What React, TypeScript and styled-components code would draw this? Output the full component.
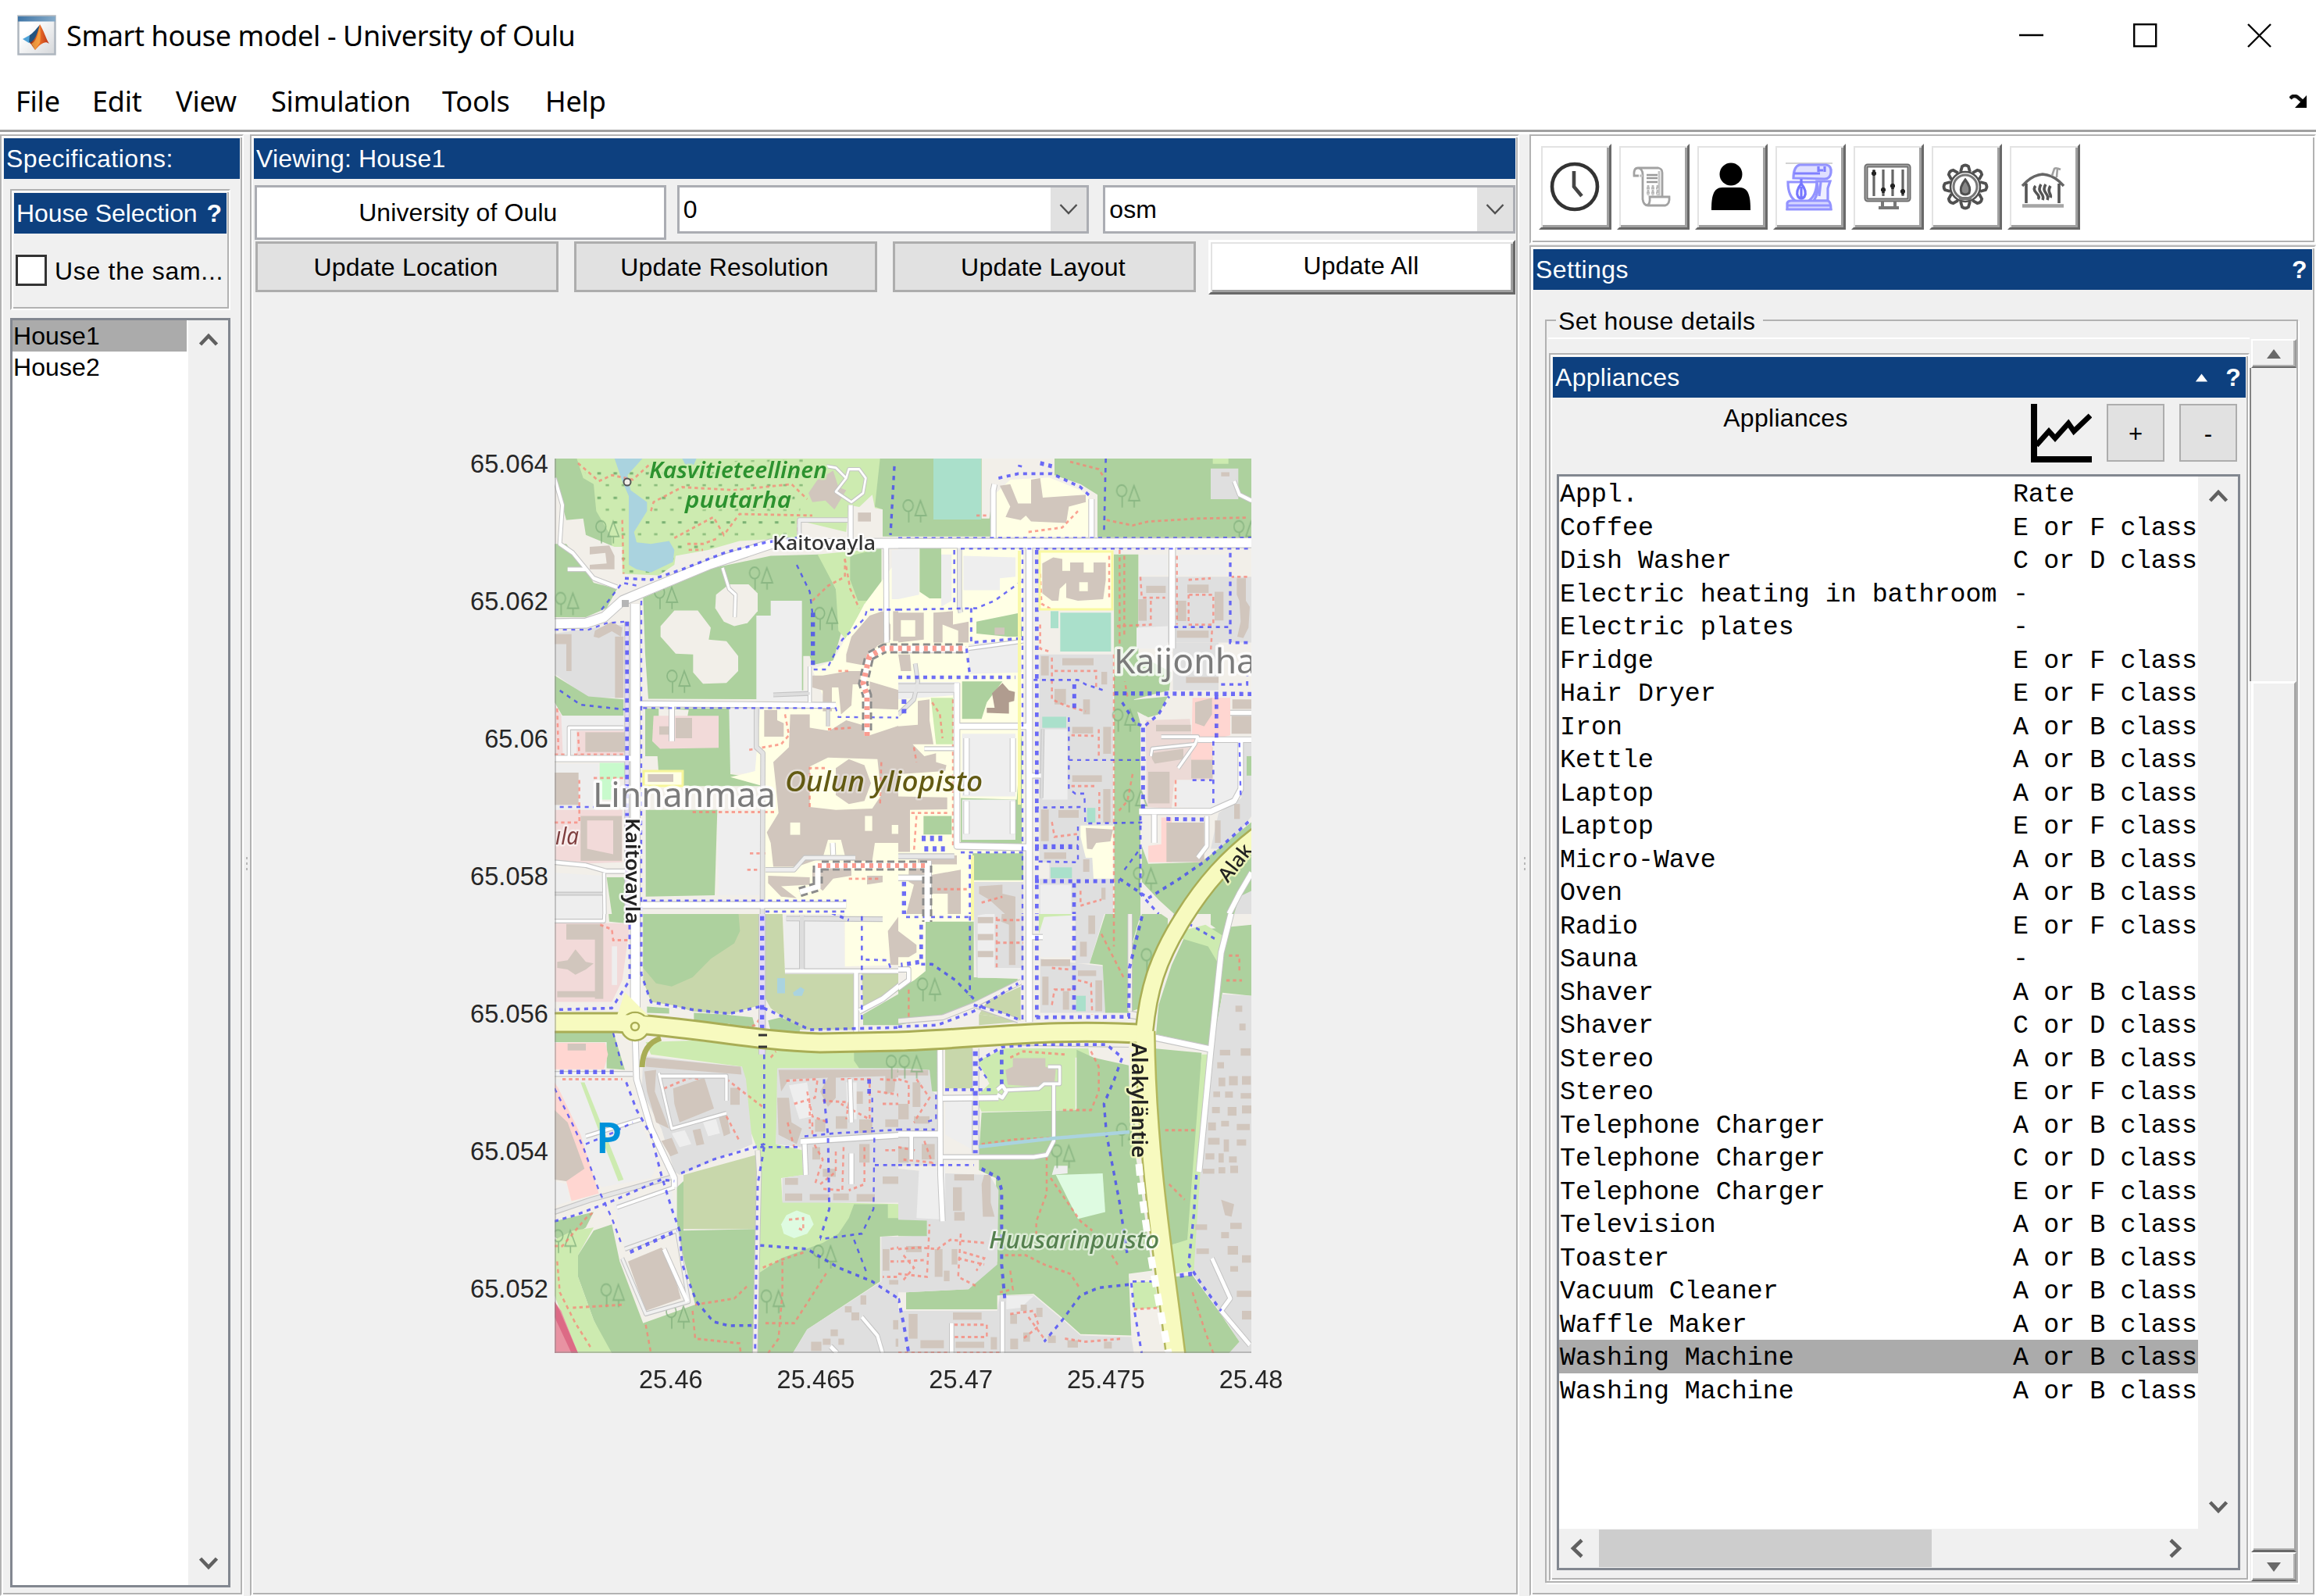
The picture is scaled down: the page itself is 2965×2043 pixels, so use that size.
import React from "react";
import styled, { createGlobalStyle, css } from "styled-components";

const BLUE = "#0d407f";
const FACE = "#f0f0f0";
const EDGE = "#b2b2b2";
const SANS = '"Liberation Sans", Arial, sans-serif';
const UI = '"Noto Sans", "Segoe UI", sans-serif';
const MONO = '"Liberation Mono", "Courier New", monospace';

const Global = createGlobalStyle`
  *, *::before, *::after { box-sizing: border-box; }
  html, body { margin: 0; padding: 0; background: #fff; overflow: hidden; }
`;

const Window = styled.div`
  width: 2965px;
  height: 2043px;
  display: flex;
  flex-direction: column;
  background: ${FACE};
  font-family: ${SANS};
  font-size: 32px;
  letter-spacing: 0.1px;
  color: #000;
  overflow: hidden;
  white-space: pre;
`;

/* ---------- title and menu ---------- */

const TitleBar = styled.header`
  flex: none;
  height: 90px;
  padding: 0 57px 0 22px;
  display: flex;
  align-items: center;
  background: #fff;
  font-family: ${UI};
  font-size: 36px;
`;

const Title = styled.h1`
  margin: 0 auto 0 13px;
  font: inherit;
  letter-spacing: -0.37px;
`;

const Controls = styled.div`
  display: flex;
  align-items: center;
  gap: 115px;
  svg { display: block; }
`;

const MenuBar = styled.nav`
  flex: none;
  height: 82px;
  display: flex;
  align-items: center;
  padding: 0 10px 0 20px;
  font-family: ${UI};
  font-size: 36px;
  background: #fff;
  border-bottom: 3px solid #fff;
  box-shadow: inset 0 -3px 0 #a0a0a0;
  svg { margin-left: auto; }
`;

const MenuItem = styled.span<{ $w: number }>`
  width: ${(p) => p.$w}px;
  letter-spacing: -0.2px;
  padding-bottom: 1px;
`;

/* ---------- panels ---------- */

const Body = styled.main`
  flex: 1;
  min-height: 0;
  display: grid;
  grid-template-columns: 312px 8px 1625px 13px 1007px;
`;

const etched = css`
  border: 2px solid;
  border-color: ${EDGE} #fff #fff ${EDGE};
  box-shadow: inset 2px 2px 0 #fff, inset -2px -2px 0 ${EDGE};
  padding: 3px;
`;

const Panel = styled.section<{ $bg?: string }>`
  ${etched}
  background: ${(p) => p.$bg ?? FACE};
  display: flex;
  flex-direction: column;
  min-height: 0;
  min-width: 0;
`;

const Bar = styled.div<{ $track?: number }>`
  flex: none;
  height: 52px;
  display: flex;
  align-items: center;
  justify-content: space-between;
  background: ${BLUE};
  color: #fff;
  padding: 0 6px 0 3px;
  letter-spacing: ${(p) => p.$track ?? 0.1}px;
`;

const BarTools = styled.span`
  display: flex;
  align-items: center;
  gap: 22px;
  font-weight: bold;
`;

const Splitter = styled.div`
  display: flex;
  flex-direction: column;
  align-items: center;
  justify-content: flex-start;
  padding-top: 925px;
  gap: 4px;
  i { width: 2px; height: 3px; background: #b8b8b8; }
`;

/* ---------- left column ---------- */

const SpecBody = styled.div`
  flex: 1;
  min-height: 0;
  display: flex;
  flex-direction: column;
  gap: 10px;
  padding: 13px 12px 6px 8px;
`;

const SelectionPanel = styled(Panel)`
  height: 155px;
  flex: none;
`;

const CheckRow = styled.label`
  display: flex;
  align-items: center;
  gap: 10px;
  padding: 1px 0 0 2px;
  height: 96px;
  letter-spacing: 0.7px;
  span + span { padding-top: 2px; }
`;

const Box = styled.span`
  flex: none;
  width: 40px;
  height: 40px;
  border: 3px solid #333;
  background: #fff;
`;

const ListFrame = styled.div`
  flex: 1;
  min-height: 0;
  border: 3px solid #828790;
  background: #fff;
  display: flex;
`;

const Items = styled.div`
  flex: 1;
  min-width: 0;
  overflow: hidden;
`;

const HouseItem = styled.div<{ $on?: boolean }>`
  height: 40px;
  line-height: 40px;
  padding-left: 1px;
  margin-right: 2px;
  background: ${(p) => (p.$on ? "#ababab" : "transparent")};
`;

const ScrollCol = styled.div`
  flex: none;
  width: 51px;
  background: ${FACE};
  display: flex;
  flex-direction: column;
  justify-content: space-between;
  align-items: center;
  padding: 12px 0 15px;
`;

/* ---------- centre ---------- */

const Fields = styled.div`
  display: flex;
  align-items: flex-start;
  padding: 8px 0 0 1px;
  height: 78px;
`;

const TextField = styled.div`
  width: 527px;
  height: 70px;
  margin-right: 14px;
  padding-right: 6px;
  border: 3px solid #abadb3;
  background: #fff;
  display: flex;
  align-items: center;
  justify-content: center;
`;

const Dropdown = styled.div`
  width: 528px;
  height: 62px;
  margin-right: 18px;
  border: 3px solid #abadb3;
  background: #fff;
  display: flex;
  justify-content: space-between;
  align-items: center;
  padding-left: 5px;
  &:last-child { margin-right: 0; }
`;

const DropArrow = styled.span`
  width: 46px;
  height: 100%;
  background: #e1e1e1;
  display: flex;
  align-items: center;
  justify-content: center;
`;

const Actions = styled.div`
  display: flex;
  align-items: flex-start;
  padding: 0 0 0 2px;
  gap: 20px;
  height: 70px;
`;

const raised = css`
  background: #fff;
  border: 3px solid;
  border-color: #fff #696969 #696969 #fff;
  box-shadow: inset 2px 2px 0 #e3e3e3, inset -3px -3px 0 #a0a0a0;
`;

const Button = styled.button<{ $w: number; $raised?: boolean }>`
  width: ${(p) => p.$w}px;
  height: 65px;
  margin: 2px 0 0;
  padding: 2px 3px 0 0;
  font: inherit;
  letter-spacing: 0.2px;
  color: inherit;
  border: 3px solid #adadad;
  background: #e1e1e1;
  ${(p) =>
    p.$raised &&
    css`
      ${raised}
      height: 70px;
      margin: 0 0 0 -4px;
      padding: 0 2px 3px 0;
    `}
`;

const Plot = styled.figure`
  margin: 210px 0 0;
  padding-left: 230px;
  display: grid;
  grid-template-columns: 147px 892px;
  column-gap: 8px;
  color: #262626;
  font-size: 32.5px;
  svg { display: block; }
`;

const YAxis = styled.div`
  display: flex;
  flex-direction: column;
  margin-top: -81px;
`;

const YTick = styled.span`
  height: 176.1px;
  display: flex;
  align-items: center;
  justify-content: flex-end;
`;

const XAxis = styled.div`
  grid-column: 2;
  display: grid;
  grid-template-columns: repeat(5, 185.7px);
  margin: 9px 0 0 56px;
  text-align: center;
`;

/* ---------- right column ---------- */

const RightCol = styled.div`
  display: grid;
  grid-template-rows: 140px 1fr;
  row-gap: 2px;
  min-height: 0;
`;

const Toolbar = styled(Panel)`
  flex-direction: row;
  gap: 7px;
  padding: 10px 0 0 10px;
`;

const ToolButton = styled.button`
  ${raised}
  width: 93px;
  height: 110px;
  padding: 0 2px 0 0;
  display: flex;
  align-items: center;
  justify-content: center;
`;

const SettingsBody = styled.div`
  flex: 1;
  min-height: 0;
  padding: 21px 18px 12px 15px;
  display: flex;
`;

const Group = styled.fieldset`
  flex: 1;
  min-width: 0;
  margin: 0;
  border: 2px solid ${EDGE};
  box-shadow: 2px 2px 0 #fff;
  padding: 0;
  display: flex;
  flex-direction: column;
`;

const Legend = styled.legend`
  margin-left: 12px;
  padding: 0 10px 0 3px;
  height: 36px;
  line-height: 39px;
  letter-spacing: 0.4px;
`;

const GroupBody = styled.div`
  flex: 1;
  min-height: 0;
  display: flex;
  margin: 4px 0 0 2px;
`;

const GroupMain = styled.div`
  flex: 1;
  min-width: 0;
  display: flex;
  flex-direction: column;
  border-top: 2px solid #fff;
  padding-top: 18px;
`;

const AppliancePanel = styled(Panel)`
  flex: 1;
  margin-left: 1px;
`;

const ListHeader = styled.div`
  flex: none;
  display: grid;
  grid-template-columns: 578px 78px 74px 74px;
  column-gap: 19px;
  align-items: start;
  height: 98px;
  padding: 8px 0 0 15px;
`;

const ListTitle = styled.span`
  text-align: center;
  padding-right: 12px;
  letter-spacing: 0.3px;
`;

const SmallButton = styled.button`
  height: 74px;
  width: 74px;
  padding: 4px 0 0;
  font: 31px ${SANS};
  border: 2px solid #adadad;
  background: #e1e1e1;
  color: #000;
`;

const ApplianceList = styled.div`
  flex: 1;
  min-height: 0;
  margin: 0 7px 9px 5px;
  border: 3px solid #828790;
  background: #fff;
  display: grid;
  grid-template-columns: 1fr 51px;
  grid-template-rows: 1fr 50px;
`;

const Rows = styled.div`
  font-family: ${MONO};
  font-size: 33.3px;
  letter-spacing: 0;
  overflow: hidden;
`;

const Row = styled.div<{ $on?: boolean }>`
  display: grid;
  grid-template-columns: 580px 1fr;
  height: 42.5px;
  line-height: 46px;
  padding-left: 1px;
  background: ${(p) => (p.$on ? "#ababab" : "transparent")};
`;

const Rate = styled.span`
  letter-spacing: -0.35px;
`;

const HScroll = styled.div`
  background: ${FACE};
  display: flex;
  align-items: center;
  padding: 0 16px 0 10px;
`;

const HThumb = styled.span`
  width: 426px;
  height: 48px;
  margin: 0 auto 0 15px;
  background: #cdcdcd;
`;

const Corner = styled.span`
  background: ${FACE};
`;

const OldScroll = styled.div`
  flex: none;
  width: 60px;
  display: flex;
  flex-direction: column;
  padding-top: 2px;
`;

const OldArrow = styled.span`
  flex: none;
  height: 37px;
  margin-left: 2px;
  background: ${FACE};
  border: 2px solid;
  border-color: #fff #9a9a9a #696969 #fff;
  box-shadow: inset -2px -2px 0 #b0b0b0;
  display: flex;
  align-items: center;
  justify-content: center;
`;

const OldTrough = styled.span`
  flex: none;
  height: 401px;
  border-left: 2.500px solid #828282;
`;

const OldThumb = styled.span`
  flex: 1;
  margin-left: 2px;
  border: 3px solid;
  border-color: #fff #a6a6a6 #696969 #fff;
  box-shadow: inset 0 -2px 0 #b0b0b0;
`;

/* ---------- icons ---------- */

type Dir = "up" | "down" | "left" | "right";
const ROT: Record<Dir, number> = { up: 0, right: 90, down: 180, left: 270 };

const Chevron = ({ dir, thin }: { dir: Dir; thin?: boolean }) => (
  <svg width="26" height="26" viewBox="-13 -13 26 26">
    <path
      d="M-10.5 6 L0 -5 L10.5 6"
      transform={`rotate(${ROT[dir]})`}
      fill="none"
      stroke={thin ? "#505050" : "#606060"}
      strokeWidth={thin ? 2.4 : 4.6}
    />
  </svg>
);

const Triangle = ({ dir, fill, size }: { dir: Dir; fill: string; size: number }) => (
  <svg width={size} height={size} viewBox="-10 -10 20 20">
    <path d="M-9 6 L0 -6 L9 6Z" transform={`rotate(${ROT[dir]})`} fill={fill} />
  </svg>
);

const Logo = () => (
  <svg width="50" height="52" viewBox="0 0 50 52">
    <defs>
      <linearGradient id="lgFace" x1="0" y1="0" x2="1" y2="1">
        <stop offset="0.3" stopColor="#fff" />
        <stop offset="1" stopColor="#d4d6d9" />
      </linearGradient>
      <linearGradient id="lgTop" x1="0" y1="0" x2="1" y2="0">
        <stop offset="0" stopColor="#3f75a6" />
        <stop offset="1" stopColor="#86abc9" />
      </linearGradient>
      <linearGradient id="lgFlame" x1="0" y1="0" x2="1" y2="0">
        <stop offset="0" stopColor="#8c2310" />
        <stop offset="0.45" stopColor="#f0762a" />
        <stop offset="1" stopColor="#b92f16" />
      </linearGradient>
    </defs>
    <rect x="1.5" y="1.5" width="47" height="49" fill="url(#lgFace)" stroke="#aeb6bf" strokeWidth="2.5" />
    <rect x="1" y="2" width="48" height="6.5" fill="url(#lgTop)" />
    <path d="M7 31 L16 26 L21 31 L15 36Z" fill="#4fa3d8" />
    <path d="M16 26 C21 23 25 17 29 13 L26 28 L19 37 L15 35Z" fill="#23547f" />
    <path d="M29 12 C34 20 37 31 41 37 C36 33 31 36 23 45 C20 41 18 37 16 36 C23 33 26 24 29 12Z" fill="url(#lgFlame)" />
    <path d="M29 14 C30 22 30 32 29 36 C27 38 25 42 23 45 C21 41 19 38 18 37 C24 35 27 24 29 14Z" fill="#f8b04a" opacity=".7" />
  </svg>
);

const ClockIcon = () => (
  <svg width="64" height="64" viewBox="0 0 64 64" fill="none" stroke="#333">
    <circle cx="32" cy="32" r="29" strokeWidth="4.6" />
    <path d="M31 12 V32 L41 44" strokeWidth="4.6" stroke="#444" />
  </svg>
);

const ScrollIcon = () => (
  <svg width="64" height="64" viewBox="0 0 64 64" fill="none" stroke="#a2a2a2" strokeWidth="2.8">
    <path d="M14 18 H8 Q7 8 13 8 H39 Q44 9 44 14 V44" />
    <path d="M14 8 Q19 10 19 16 V48 Q20 56 26 56 H48 Q54 54 53 45 H28 Q29 55 24 56" />
    <path d="M40 12 V44 M15 18 H19" stroke="#c4c4c4" />
    <path d="M24 17 H38 M24 21 H38 M24 26 H38" stroke="#9a9a9a" strokeWidth="2.4" />
    <path d="M24 34 H38 M24 40 H38 M26 30 V43 M32 30 V43 M38 30 V43" stroke="#b9b9b9" strokeDasharray="4 2" />
  </svg>
);

const PersonIcon = () => (
  <svg width="64" height="64" viewBox="0 0 64 64">
    <circle cx="32" cy="16" r="14.5" />
    <path d="M7 62 C7 45 9 33 21 33 H43 C55 33 57 45 57 62Z" />
  </svg>
);

const MixerIcon = () => (
  <svg width="64" height="64" viewBox="0 0 64 64" fill="none" stroke="#9393ff" strokeWidth="3.2">
    <path d="M2 2 H62 M2 61 H62" stroke="#d2d2d2" strokeWidth="2" />
    <path d="M12 21 Q12 6 20 4 H54 Q61 5 60 14 Q59 22 52 22 Z" fill="#e0e0ff" />
    <path d="M13 15 H46 M44 11 H50 M44 6 V13 M52 6 V13" stroke="#8080ff" />
    <path d="M5 26 H42 Q41 45 30 51 H16 Q5 45 5 26 Z" />
    <path d="M22 22 V30 M22 28 Q14 38 18 45 Q22 49 26 45 Q30 38 22 28 Z M22 32 V46" stroke="#7676ff" />
    <path d="M42 25 H59 L56 34 V50 H38 Q45 40 42 25 Z M47 26 L45 44" fill="#f0f0ff" />
    <path d="M4 61 V53 Q5 50 9 50 H56 Q60 51 60 61 Z M5 56 H59" fill="#d6d6ff" />
  </svg>
);

const PanelIcon = () => (
  <svg width="64" height="64" viewBox="0 0 64 64" fill="none">
    <rect x="5" y="5" width="55" height="44" rx="2" stroke="#6d6d6d" strokeWidth="5" />
    <rect x="5" y="5" width="55" height="44" rx="2" stroke="#a5a5a5" strokeWidth="1.5" />
    <path d="M26 50 V57 M42 50 V57" stroke="#777" strokeWidth="4" />
    <path d="M21 59 H47" stroke="#777" strokeWidth="4" />
    <path d="M15 10 V44 M27 10 V44 M39 10 V44 M52 10 V44" stroke="#666" strokeWidth="3.2" />
    <path d="M12 15 H18 M15 11 V18 M24 36 H30 M27 33 V40 M36 31 H42 M39 28 V35 M49 38 H55 M52 35 V42" stroke="#222" strokeWidth="3.4" />
  </svg>
);

const GearIcon = () => {
  const teeth = Array.from({ length: 8 }, (_, i) => i * 45);
  return (
    <svg width="64" height="64" viewBox="-32 -32 64 64" fill="none" stroke="#505050">
      {teeth.map((a) => (
        <path key={a} d="M-6 -19 L-4 -26 Q0 -29 4 -26 L6 -19" transform={`rotate(${a})`} strokeWidth="3.8" />
      ))}
      <circle r="19" strokeWidth="2.6" />
      <circle r="15" strokeWidth="3" stroke="#777" />
      <path d="M0 -9 Q-8 1 -5 8 Q0 12 5 8 Q8 1 0 -9Z" strokeWidth="3" fill="#888" />
      <path d="M-8 15 H8" strokeWidth="4" stroke="#777" />
    </svg>
  );
};

const SaunaIcon = () => (
  <svg width="64" height="64" viewBox="0 0 64 64" fill="none" stroke="#555">
    <path d="M5 31 L11 25 Q20 17 31 16 Q43 17 52 25 L58 31" strokeWidth="3.6" stroke="#666" />
    <path d="M10 28 V53 M52 28 V53" strokeWidth="3.6" />
    <path d="M43 18 L46 9 Q48 7 54 10 M49 20 L50 8" strokeWidth="2.6" stroke="#a0a0a0" />
    <path d="M5 56.500 H58" strokeWidth="4.5" stroke="#a5a5a5" />
    <path d="M22 31 Q18 35 23 40 T25 48 M29 29 Q25 35 29 40 T31 49 M35 29 Q31 35 35 40 T37 49 M41 31 Q38 36 40 40 T41 46" strokeWidth="3.6" />
  </svg>
);

const ChartIcon = () => (
  <svg width="78" height="76" viewBox="0 0 78 76" fill="none" stroke="#000">
    <path d="M4 0 V71 H78" strokeWidth="8" />
    <path d="M7 53 L23 35 L31 44 L48 25 L55 35 L76 15" strokeWidth="6.8" />
  </svg>
);

/* ---------- street map ---------- */

type Area = [string, string];
type Rect = [number, number, number, number];
interface Sheet {
  x: number;
  y: number;
  h: number;
  areas: Area[];
  buildings: string[];
  blocks: Rect[];
  holes?: Area[];
  roads: [string, number, string?][];
  cycle: [string, number?][];
  foot: string[];
  trees: [number, number][];
}

const G = "#add19e";
const L = "#cdebb0";
const B = "#f2efe9";
const R = "#dfdfdf";
const K = "#eeeeee";
const U = "#ffffe5";
const C = "#f2dad9";
const T = "#ffd6d1";
const P = "#aae0cb";
const W = "#aad3df";
const S = "#c8d7ab";
const YL = "#f7fabf";

const northWest: Sheet = {
  x: 700, y: 570, h: 600,
  areas: [
    [L, "110,44 1285,44 1285,220 1160,200 1150,290 960,250 960,310 740,320 620,350 495,370 490,400 430,435 290,430 290,340 250,340 180,250 150,150"],
    ["url(#dots)", "140,70 1000,44 960,300 740,320 495,370 490,400 430,435 290,430 280,300 180,200"],
    [G, "30,44 115,44 140,110 180,130 190,220 250,310 250,340 75,310 75,250 50,170 30,110"],
    [G, "30,330 75,330 150,420 180,460 270,480 230,545 150,575 30,575"],
    [B, "75,250 140,245 150,300 260,340 285,440 200,450 160,400 75,320"],
    [G, "1280,44 1380,44 1380,305 1290,305 1290,215 1260,205"],
    [B, "1190,215 1250,165 1260,210 1290,215 1290,310 1180,310"],
    [W, "260,44 368,44 310,100 322,150 385,190 385,220 335,290 345,325 400,330 470,320 490,350 485,390 400,425 345,415 315,400 315,170 290,120"],
    [W, "520,44 575,44 565,65 535,70"],
    [G, "370,510 640,410 860,370 1045,365 1110,480 1140,600 1100,720 1020,735 1010,705 985,705 985,850 390,848 378,700"],
    [L, "1040,365 1285,345 1285,520 1220,530 1150,650 1120,620 1110,480"],
    [G, "1165,370 1285,345 1285,520 1195,520 1165,450"],
    [K, "860,520 980,520 980,820 1010,820 1010,855 805,855 805,570 860,570"],
    [R, "30,630 180,610 295,600 295,845 160,845 30,765"],
    [G, "30,770 160,840 295,850 295,905 60,905 30,860"],
    [K, "30,870 60,905 295,905 295,1035 30,1035"],
    [C, "30,870 55,900 62,1035 30,1035"],
    [C, "115,955 300,955 300,1035 115,1035"],
    [G, "378,880 705,880 705,1100 820,1115 820,1140 378,1140"],
    [B, "370,1040 425,1040 430,1100 370,1100"],
    [B, "430,880 545,885 540,910 430,910"],
    [C, "410,905 660,905 660,1012 435,1015 405,990"],
    [K, "700,880 820,880 820,1100 705,1095"],
    [U, "1225,525 1380,345 1380,1568 840,1568 830,1140 705,1110 800,1090 820,880 1080,880 1020,750 1100,720"],
    [K, "1325,350 1380,350 1380,515 1325,515"],
    [U, "370,1092 522,1092 522,1145 370,1145"],
    [K, "655,1235 830,1235 830,1505 660,1505"],
    [G, "380,1220 655,1220 645,1505 380,1510"],
    [K, "30,1065 200,1065 200,1220 30,1220"],
    ["#c8facc", "203,1062 312,1062 312,1110 250,1115 250,1185 203,1185"],
    [C, "30,1220 290,1220 290,1395 120,1400 30,1390"],
    [K, "30,1430 215,1440 215,1568 30,1568"],
    [G, "230,1445 300,1445 300,1568 250,1568"],
  ],
  buildings: [
    "30,632 95,632 95,755 75,755 75,665 30,665",
    "180,640 185,620 250,590 290,610 285,640 250,622 200,645",
    "165,340 240,335 260,370 260,415 165,415 165,400 230,395 225,360 165,365",
    "1005,160 1040,115 1100,85 1120,140 1150,150 1105,215 1070,185 1020,190",
    "835,885 885,885 885,920 910,930 910,975 835,975",
    "1020,770 1060,770 1160,755 1210,755 1200,800 1175,800 1170,870 1130,900 1120,810 1095,810 1095,890 1060,890 1060,820 1020,810",
    "1150,700 1170,640 1240,570 1290,555 1320,600 1320,650 1270,670 1210,735 1150,725",
    "1240,790 1355,820 1380,850 1380,885 1240,880",
    "935,900 1010,900 1010,945 1085,955 1150,920 1230,940 1240,970 1380,930 1380,1330 1260,1330 1250,1390 1150,1390 1130,1320 1080,1320 1060,1380 960,1410 870,1410 860,1330 845,1295 890,1230 880,1140 870,1060 930,1010",
    "1020,1420 1170,1400 1170,1440 1100,1450 1060,1490 1020,1460",
    "850,1440 1010,1445 1010,1470 900,1475 960,1515 900,1510 850,1465",
  ],
  blocks: [
    [262, 640, 33, 205], [148, 960, 155, 66], [495, 912, 63, 68], [432, 940, 45, 28], [388, 1100, 98, 26],
    [30, 1095, 92, 108], [130, 1240, 158, 150], [1195, 225, 50, 30], [1330, 555, 50, 100], [1350, 690, 30, 60],
    [1230, 1440, 60, 30],
  ],
  holes: [
    [C, "155,1255 255,1255 255,1368 155,1350"],
    [U, "1010,1075 1080,1045 1270,1050 1285,1170 1250,1215 1110,1220 1010,1210"],
    [U, "935,1262 973,1262 973,1303 935,1303"],
    [U, "1222,1240 1250,1240 1250,1290 1222,1290"],
    [U, "1260,700 1350,700 1355,800 1250,790"],
    [U, "1290,1380 1380,1370 1380,1400 1290,1400"],
    [U, "1325,1270 1365,1270 1365,1300 1325,1300"],
    ["#d1c6bd", "1110,1080 1160,1050 1220,1070 1245,1130 1220,1190 1160,1200 1110,1170"],
    [U, "1155,1480 1300,1460 1380,1470 1380,1568 1170,1568"],
    [B, "490,553 580,553 630,610 622,650 690,655 735,705 735,755 690,795 600,798 562,760 562,700 495,697 437,640 437,605"],
    [B, "700,465 775,465 810,495 810,555 770,595 720,605 680,590 647,545 650,500"],
  ],
  roads: [
    ["30,110 60,200 50,330 100,360 180,445 270,475", 12], ["80,415 150,415", 12],
    ["675,410 700,480 725,500 722,575", 10],
    ["1075,70 1110,75 1150,110 1160,80 1200,80 1225,110 1215,160 1170,190 1110,155 1150,110", 8],
    ["970,300 970,250 1155,250", 12, "#eee"], ["1167,200 1167,320", 16],
    ["355,865 1110,870", 17], ["1010,860 1010,740", 10], ["870,835 1010,830", 10, "#ddd"],
    ["480,870 480,990", 18], ["30,1048 330,1048", 18], ["85,1040 85,945 295,945", 10],
    ["805,880 805,1010 830,1030 828,1568", 14, "#e3e3e3"], ["1080,885 1080,940", 10, "#ddd"],
    ["30,1395 150,1405 230,1425 330,1425", 12], ["220,1430 222,1568", 10], ["30,1500 215,1500", 7, "#ddd"],
    ["360,1538 1150,1538", 20], ["840,1420 950,1420 990,1380 1185,1380", 12, "#eee"], ["1098,1330 1100,1370", 16],
    ["1303,340 1305,660", 17],
    ["308,590 308,1568", 14, "#e4dcf2"],
    ["30,597 150,595 220,575 290,520 400,480 620,400 860,330 1380,328", 31], ["340,530 340,1568", 34],
  ],
  cycle: [
    ["30,617 160,617 230,595 300,590", 6], ["308,590 308,1240", 14], ["363,520 363,1568", 7],
    ["370,879 1110,879 1120,909 1380,911", 6], ["960,400 1010,490 1020,560"], ["1022,560 1022,740", 16],
    ["1025,750 1075,750 1095,715 1135,650 1220,580 1230,550 1380,550"],
    ["300,445 400,450 520,415 690,357 840,325 960,310", 9], ["1335,70 1320,300", 10],
    ["50,820 130,868 310,885"], ["370,1523 1150,1523"], ["50,1210 180,1210"], ["210,550 290,460 350,470"],
    ["1358,770 1358,815", 14], ["840,1560 1160,1560"], ["1373,1460 1373,1568", 14],
  ],
  foot: [
    "120,60 200,120 250,100 330,115 400,60", "290,250 295,430", "400,220 410,190 520,140 720,150 940,130 1000,180",
    "490,310 640,240 680,300 740,230 1020,235", "540,330 600,330 660,310", "545,350 600,350", "965,250 965,300", "1020,520 1080,470 1145,440 1145,380", "1145,380 1165,480 1200,545",
    "180,1113 310,1113", "120,960 125,1040", "560,1227 880,1227", "915,900 930,970 900,1000 770,1020",
    "40,880 45,1030", "30,1262 125,1262 125,1120", "780,1365 840,1365", "770,1420 840,1420", "1010,1210 1010,1080 1080,1080",
    "1080,950 1170,945", "1285,1060 1280,1200", "1120,755 1160,755", "30,1035 300,1035", "1160,1450 1280,1450",
  ],
  trees: [[185, 250], [30, 490], [410, 470], [775, 405], [1025, 540], [458, 750]],
};

const northEast: Sheet = {
  x: 1150, y: 570, h: 600,
  areas: [
    [G, "0,44 355,44 355,305 0,305"], [P, "135,44 318,44 318,248 135,248"],
    [B, "320,44 600,44 600,110 370,120 350,245 320,245"],
    [G, "600,44 1357,44 1357,308 765,308 765,165 700,130 600,100"],
    [L, "1208,44 1268,44 1268,62 1208,62"], [R, "1200,78 1306,78 1306,180 1200,180"],
    [U, "375,305 375,160 430,115 580,108 700,150 730,170 730,305"],
    [U, "0,345 480,345 480,1568 0,1568"],
    [K, "0,345 80,345 80,500 0,515"], [G, "82,345 165,345 165,512 120,512 82,490"], [K, "165,365 205,365 205,520 165,540"],
    [K, "250,370 450,375 450,440 390,445 390,485 250,485"],
    [G, "300,590 470,560 475,640 420,640 300,630"], [K, "270,665 470,650 475,760 270,765"],
    [G, "245,790 400,790 340,860 320,915 245,915"], [L, "125,845 210,845 210,1000 145,1000"],
    [G, "240,950 475,950 475,1335 240,1335"], [U, "240,950 475,950 455,1185 240,1180"],
    [K, "245,965 450,965 450,1175 245,1175"], [K, "245,1185 450,1185 450,1320 245,1320"],
    [G, "97,1240 205,1240 205,1302 97,1302"], [G, "285,1365 480,1365 480,1455 290,1455"],
    [R, "285,1460 480,1460 480,1568 285,1568"],
    [K, "0,792 235,792 235,835 0,850"],
    [U, "542,355 825,350 825,550 542,550"], [P, "622,560 817,560 817,690 622,690"], [P, "585,555 615,555 615,612 585,612"],
    [R, "542,700 825,700 825,1568 542,1568"],
    [G, "828,365 922,365 922,700 1050,760 1040,820 905,850 930,930 930,1380 930,1568 830,1568"],
    [R, "922,440 1357,440 1357,660 922,660"], [K, "925,365 1035,365 1035,435 925,435"], [K, "1070,365 1260,365 1260,435 1070,435"],
    [K, "915,610 1035,605 1035,680 915,680"], [R, "1055,660 1230,660 1230,820 1055,820"],
    [G, "828,780 1040,780 1040,820 828,830"], [G, "870,855 1035,840 1000,900 960,910 905,885"],
    ["#ecdad6", "950,920 1120,915 1130,1000 1210,1010 1210,1120 1060,1120 1050,1215 955,1210"],
    [T, "1130,845 1275,845 1275,970 1205,985 1205,1060 1125,1060"],
    [K, "1210,990 1310,990 1310,1170 1230,1215 1060,1210 1070,1120 1210,1120"], [R, "1318,990 1357,990 1357,1240 1260,1350 1200,1350 1230,1230 1318,1180"],
    [T, "1010,1245 1050,1245 1050,1395 960,1395 960,1340 1010,1335"], [T, "1130,1330 1190,1330 1160,1395 1130,1395"],
    [G, "935,1340 960,1400 1160,1395 1200,1370 1357,1260 1357,1568 935,1568"],
    [P, "553,908 645,908 645,945 553,945"], [K, "553,950 650,950 650,1185 553,1185"], [P, "725,1213 757,1213 757,1262 725,1262"],
    [P, "585,1412 667,1412 667,1448 585,1448"], [B, "525,1395 580,1395 580,1450 525,1450"], [K, "545,1470 665,1470 665,1568 545,1568"],
    [U, "700,1272 825,1272 825,1450 750,1450 745,1380 720,1380 700,1310"],
    [B, "1290,670 1357,670 1357,840 1240,840 1240,800"], [G, "1338,1040 1357,1040 1357,1105 1338,1105"],
    [R, "1310,1510 1357,1490 1357,1568 1290,1568"],
    [B, "935,1460 1000,1520 1060,1568 930,1568"],
  ],
  buildings: [
    "390,135 430,130 460,195 510,195 510,115 545,110 555,175 720,165 720,190 655,205 645,260 510,255 490,235 470,250 412,240 430,205",
    "553,395 595,375 630,380 630,420 660,420 660,392 712,392 712,425 750,425 750,392 797,392 797,450 787,515 690,520 645,510 645,460 620,480 615,520 590,520 553,495",
    "0,560 98,560 98,650 0,660", "135,560 210,555 210,600 270,590 270,660 230,660 230,620 170,600 170,660 135,660",
    "0,700 45,700 50,755 10,755", "75,855 120,850 120,920 135,1000 55,1000 100,1040 145,1030 145,1060 185,1070 180,1090 0,1100 0,940 75,935",
    "0,1175 188,1178 188,1218 45,1220 45,1360 0,1360", "1140,860 1205,845 1205,900 1175,940 1140,930", "720,1280 825,1285 815,1325 760,1330 745,1352 725,1350",
    "1300,445 1335,445 1335,520 1350,540 1345,610 1325,645 1302,640 1315,590 1310,520 1300,500", "970,1030 1095,1015 1095,1050 985,1065 975,1050",
    "40,1410 110,1410 110,1440 240,1420 240,1568 30,1568 60,1470 40,1460", "310,1475 400,1470 400,1500 450,1510 450,1568 410,1568 350,1520 310,1500",
  ],
  blocks: [
    [548, 705, 30, 65], [630, 712, 120, 24], [780, 758, 22, 42], [600, 815, 44, 52], [710, 850, 26, 50], [668, 942, 80, 22], [787, 942, 30, 90],
    [668, 1104, 114, 22], [787, 1150, 28, 112], [548, 1218, 30, 106], [615, 1220, 78, 26], [560, 1362, 85, 22], [710, 1385, 24, 42], [780, 1480, 16, 40],
    [952, 470, 75, 24], [922, 515, 32, 72], [1110, 466, 82, 28], [1070, 520, 36, 68], [1215, 490, 34, 96], [1070, 620, 122, 24], [1105, 775, 125, 20],
    [990, 935, 134, 22], [1125, 1052, 82, 62], [960, 1092, 82, 106], [1030, 1262, 145, 132], [1283, 850, 74, 32], [1280, 905, 76, 60], [1240, 90, 32, 14],
    [1216, 1255, 22, 75], [1290, 1200, 22, 50], [370, 610, 38, 24], [75, 1372, 150, 30],
  ],
  holes: [
    ["#b09c8f", "360,830 400,795 425,820 448,825 445,855 425,860 425,898 340,895 340,878 370,878"],
    [U, "695,458 728,458 728,488 695,488"], [U, "10,585 65,585 65,640 10,640"], [U, "110,1500 190,1500 190,1568 110,1568"],
  ],
  roads: [
    ["365,310 365,150 370,130", 18], ["742,310 742,180", 18], ["1290,120 1310,165 1357,185", 12],
    ["235,340 235,540 240,560", 14, "#e8e8e8"], ["0,812 230,812", 26, "#e6e6e6"], ["100,1015 215,1015", 10], ["0,900 60,850 75,790 65,730", 12, "#e4e4e4"],
    ["225,795 225,1340 500,1345", 20], ["225,940 500,940", 18], ["262,980 262,1170", 18], ["440,980 440,1160", 18], ["262,1190 262,1300", 18], ["440,1190 440,1300", 18],
    ["1052,340 1052,680", 22], ["270,680 480,655", 10], ["1010,975 1150,975 1140,1000 1075,1080", 10], ["1150,985 1357,985", 16], ["970,1040 975,1015 1140,1000", 9],
    ["925,1225 1200,1225 1290,1190 1315,1150 1315,990", 18], ["983,1235 983,1330", 18], ["1185,1240 1185,1340 1150,1380", 14], ["1275,895 1357,895", 14],
    ["1357,1430 1310,1500 1270,1568", 18], ["500,1105 555,1105", 14], ["0,1375 215,1375", 14, "#e8e8e8"], ["118,1390 118,1568", 16], ["0,1447 120,1447", 16],
    ["555,950 550,1180", 8, "#ddd"], ["0,684 260,684", 18],
    ["0,328 1357,326", 30], ["503,340 503,1568", 22],
  ],
  cycle: [
    ["0,309 1357,308", 4], ["240,346 1357,346", 6], ["385,110 460,95 590,95 700,140 742,175", 10], ["460,68 480,72"], ["545,60 590,70", 14], ["797,44 790,300", 8],
    ["215,350 215,540", 8], ["0,550 300,545 370,520 480,450"], ["280,545 280,660 480,645", 9], ["477,350 477,1568"], ["532,350 532,1568", 14],
    ["0,776 450,776", 12], ["262,680 275,770", 10], ["520,785 690,785 720,800 790,820"], ["676,800 676,890", 15], ["655,910 655,1150 680,1165 715,1165 718,1265 940,1262"],
    ["655,1053 950,1053", 6], ["525,1212 700,1210"], ["690,1275 690,1395 525,1392"], ["830,830 1357,832", 14], ["1275,360 1275,660 1357,660", 10], ["1060,608 1275,608"],
    ["860,860 910,930 945,940 1000,900 1040,840", 10], ["940,945 940,1215", 15], ["1222,835 1222,990", 14], ["1210,990 1210,1200", 8], ["1030,1250 1180,1252", 13],
    ["930,1240 930,1500 1000,1568", 9], ["850,1450 960,1515 1080,1450 1180,1390 1357,1250", 10], ["920,1360 860,1430"], ["1240,800 1340,800 1340,770", 9], ["525,1343 690,1343", 16],
    ["240,1362 480,1362"], ["275,1370 275,1568", 9], ["90,1315 180,1315", 18], ["100,1350 180,1350", 18], ["525,1458 850,1458", 13], ["675,1465 675,1568", 14], ["22,850 22,910", 18], ["22,1460 22,1568", 16],
    ["1130,1120 1205,1120"], ["1315,1170 1310,990"],
  ],
  foot: [
    "660,55 770,80 795,115", "800,250 900,268 960,255 1150,245 1340,242", "500,290 630,275 690,220", "300,235 350,235", "810,370 810,520", "850,350 850,700", "868,370 868,640",
    "930,440 935,510 1025,510", "970,520 970,600 840,605", "1115,450 1200,445", "1115,500 1115,600 1210,600 1210,500 1110,500", "1070,370 1070,600", "1205,620 1200,690", "1340,440 1280,440",
    "590,710 590,850 640,870 720,890", "600,755 760,755 760,810", "770,950 770,1050", "665,970 750,972", "665,1140 760,1140", "772,1160 772,1260", "590,1260 600,1310 690,1300",
    "828,700 828,1568", "880,840 870,790", "900,1100 880,1190 840,1230", "210,850 210,1350", "130,860 160,900 170,980", "60,1010 70,1060", "50,1230 190,1230", "70,1240 60,1360",
    "1065,1120 1065,1210", "0,684 260,684", "545,430 550,530 590,550", "545,600 545,680 580,690", "700,1490 700,1540 780,1520", "150,1485 270,1485", "108,1395 108,1568", "320,1530 400,1510",
  ],
  trees: [[15, 180], [835, 130], [1285, 250], [820, 880], [862, 1150], [900, 1410]],
};

const southWest: Sheet = {
  x: 700, y: 1160, h: 620,
  areas: [
    [K, "30,0 215,0 215,50 30,50"], [G, "235,0 300,0 300,55 240,50"], [C, "30,55 320,55 290,240 250,310 30,310"],
    [S, "370,10 820,10 820,320 700,350 560,340 480,320 400,310 370,240"],
    [G, "370,10 735,10 742,80 720,120 630,170 560,230 480,260 420,250 370,200"],
    [K, "910,30 1140,30 1145,200 915,215"], [S, "840,20 905,20 915,220 1190,220 1190,400 970,400 860,330 840,300"], [S, "1210,215 1380,215 1380,260 1215,340"],
    [U, "1145,0 1380,0 1380,190 1145,195"], [G, "1215,350 1380,270 1380,385 1215,385"], [G, "565,345 680,350 790,360 800,390 740,400 700,380 680,385 565,378"],
    [G, "850,370 900,360 975,390 970,410 860,405"], [G, "385,325 470,330 470,348 385,345"], [W, "885,233 915,233 915,282 885,282"], [W, "945,280 975,262 990,270 980,290 950,290"],
    [G, "30,405 255,405 300,530 230,525 230,440 30,440"], [T, "30,442 225,442 235,480 220,528 30,528"],
    [K, "30,560 290,560 360,700 430,830 400,880 210,910 180,870 100,720 30,600"],
    [T, "30,570 45,590 130,740 200,930 95,955 75,890 30,880"], ["#d1c6bd", "30,660 80,700 145,850 75,890 30,885"], [K, "30,890 75,900 90,955 30,970"],
    [L, "130,570 145,570 295,885 275,890 210,750"],
    [L, "380,440 560,435 800,455 1380,465 1380,525 890,525 880,770 980,790 985,870 900,880 905,955 1380,965 1380,1000 810,1180 810,790 770,700 750,520 400,480"],
    [G, "1180,470 1380,468 1380,525 1200,525 1180,500"],
    [R, "370,485 750,520 765,560 790,770 510,870 490,860 440,720 365,600"],
    [R, "885,525 1380,525 1380,960 905,960 905,880 985,870 980,780 880,770"],
    [S, "525,870 805,805 805,1045 525,1045"], [G, "500,910 525,890 525,1050 805,1045 805,1447 240,1447 180,1340 120,1200 120,1130 180,1050 250,1030 280,1150 370,1350 570,1290 500,1050"],
    [K, "255,960 480,920 505,1050 300,1110"], [G, "30,1020 180,990 150,1040 60,1090 30,1070"],
    [L, "30,1080 100,1050 180,1040 120,1130 120,1200 180,1340 250,1447 115,1447 30,1260"],
    ["#e892a2", "30,1280 55,1310 120,1447 30,1447"], ["#dc6a85", "30,1280 50,1310 120,1447 95,1447 30,1330"],
    [L, "810,965 1180,965 1120,1060 1040,1090 900,1140 810,1190"], [G, "1180,965 1310,965 1310,1010 1380,1010 1380,1065 1280,1070 1280,1215 1000,1370 945,1447 810,1447 810,1190 900,1140 1060,1090 1120,1060 1160,1010"],
    [R, "1285,1070 1380,1070 1380,1447 945,1447 1000,1370 1285,1215"],
    ["#defbe1", "900,1030 920,1000 960,985 1010,1000 1025,1030 1000,1060 950,1075 910,1060"],
  ],
  buildings: [
    "40,180 80,175 110,140 150,180 180,185 150,205 110,222 80,205 40,200", "380,490 745,520 748,545 380,520", "375,535 420,530 415,600 470,720 420,700 385,600",
    "485,590 605,555 642,655 510,700 490,640", "312,1150 440,1105 470,1130 515,1270 380,1310 350,1240", "440,760 480,750 505,800 475,810", "560,725 590,720 605,770 575,775", "660,680 690,670 705,735 680,745",
    "1310,80 1380,0 1380,190 1320,190",
    "890,530 1380,528 1380,550 1340,555 1335,600 1300,610 1300,550 1110,555 1110,620 1080,650 1050,600 1080,555 930,560 900,600",
    "885,620 930,620 940,700 980,720 960,770 890,740",
  ],
  blocks: [
    [75, 58, 130, 50], [185, 60, 32, 240], [40, 275, 170, 20], [80, 445, 70, 22], [705, 588, 36, 55], [1030, 690, 40, 40], [1110, 680, 44, 40], [1200, 690, 50, 45], [1180, 600, 34, 40], [1300, 690, 70, 25],
    [915, 930, 66, 24], [1010, 932, 75, 20], [1100, 930, 60, 22], [1190, 932, 70, 24], [1020, 780, 30, 40], [1060, 850, 50, 26], [1200, 770, 40, 60], [1290, 875, 90, 24], [1355, 920, 25, 90], [915, 880, 50, 22],
    [1290, 1110, 26, 70], [1315, 1210, 65, 15], [1205, 1260, 22, 30], [1170, 1315, 30, 26], [1145, 1295, 26, 20], [1090, 1370, 28, 22], [1015, 1410, 40, 30], [1060, 1400, 30, 20], [1330, 1340, 30, 30], [1120, 1400, 22, 20],
    [1340, 1400, 40, 26],
  ],
  holes: [[K, "480,735 530,725 555,770 510,780"], [K, "600,700 650,690 665,735 620,745"], [K, "930,580 1000,570 1020,680 970,690"], [K, "1150,570 1190,570 1190,690 1155,690"], [K, "250,130 270,130 270,255 250,255"]],
  roads: [
    ["222,0 220,48 30,48", 9], ["920,40 1290,42", 12, "#e2e2e2"], ["980,30 980,205", 16, "#ddd"], ["915,210 1380,210", 12], ["1188,205 1188,425", 16], ["1200,340 1290,300 1380,240", 16],
    ["30,543 330,543", 13, "#f4f4f4"], ["435,550 690,550 690,630", 10], ["430,540 480,720 690,670", 9], ["30,990 170,950 490,875", 12, "#e6e6e6"], ["270,975 490,910", 10],
    ["150,745 360,690", 10], ["975,762 1380,740", 16], ["990,770 995,870", 16], ["1165,560 1170,700", 14], ["1170,800 1170,900", 16],
    ["300,1110 500,1050 545,1280 380,1320 290,1140", 10, "#f0f0f0"], ["450,1110 540,1280", 14], ["1210,1330 1270,1390 1290,1447", 12], ["1090,1425 1115,1447", 14],
    ["810,790 815,860 800,1447", 16, B], ["340,430 345,560 400,720 490,880 490,910", 20], ["827,0 827,480", 22, "#e4dcf2"],
    ["340,0 340,400", 34],
  ],
  cycle: [
    ["318,60 318,240 250,330 30,335", 9], ["363,20 363,220 400,310 560,335 700,348 820,325 900,355 1010,400 1380,392", 9], ["827,0 827,480", 16], ["835,480 835,770 800,780 640,820 500,870", 8],
    ["255,410 290,520"], ["50,537 270,537", 14], ["30,590 90,690 140,780 200,920 250,1010 290,1100"], ["305,570 345,660 400,740 440,870 480,980 510,1050 520,1160 575,1280 640,1345 700,1358 805,1357", 9],
    ["30,1020 110,1000 250,955 440,885 490,890", 8], ["150,770 250,735 330,700"], ["820,780 980,780"], ["835,780 810,900 805,1140 800,1447", 9], ["1065,560 1065,620 1080,740 1085,980 1050,1075", 9],
    ["990,745 1110,735 1380,722", 7], ["1250,620 1250,720"], ["1258,750 1255,980 1210,1060 1050,1078"], ["1260,838 1380,838"], ["820,1098 1000,1110 1120,1170 1250,1215 1350,1270 1380,1380", 9], ["1180,1080 1230,1190"],
    ["1210,0 1210,380", 8], ["1225,173 1310,175 1320,200"], ["840,15 1090,20 1160,45", 9], ["320,1120 500,1050", 12], ["1238,560 1238,610", 14],
  ],
  foot: [
    "205,60 250,75 255,110 310,110", "640,390 740,400 800,385 840,340", "450,590 550,555 590,560", "690,560 760,605 830,650", "690,680 740,760", "860,490 880,470",
    "920,565 1040,560 1030,620 950,640", "1060,630 1160,635 1150,690", "1130,560 1240,560 1240,690 1130,640", "1280,560 1380,565", "1290,640 1380,640", "1020,700 1020,760 1060,820 1030,900", "1140,780 1135,920 1060,915", "1220,780 1220,900 1160,920",
    "1300,790 1380,790", "925,700 950,780", "1000,600 1020,680 1080,700", "1270,600 1350,610 1370,690", "1010,640 1010,720", "1050,900 1110,860 1110,790", "930,1015 985,1010 985,1050 960,1040", "30,1100 60,1100 150,1010 180,990", "40,1150 50,1250 110,1350 170,1430", "380,1355 400,1447", "100,1300 300,1290", "570,1290 720,1270 770,1230",
    "560,1310 570,1400 740,1415 745,1447", "830,1170 900,1145 990,1120", "905,1150 905,1250 890,1400 850,1447", "840,1350 950,1350 1080,1180", "1320,1110 1380,1100", "1320,1150 1370,1150 1370,1200 1290,1200", "60,560 290,560",
  ],
  trees: [[20, 1045], [205, 1220], [455, 1290], [820, 1240], [1020, 1095], [1300, 480]],
};

const southEast: Sheet = {
  x: 1150, y: 1160, h: 620,
  areas: [
    [U, "0,0 285,0 285,50 105,50 100,230 60,250 0,190"], [G, "105,50 290,50 290,230 460,235 440,260 300,310 200,350 0,385 0,270 60,240 105,210"],
    [R, "290,0 480,0 480,230 300,230"], [K, "305,30 370,20 370,200 480,200 480,232 305,232"], [S, "310,350 340,310 470,260 470,370 400,360"], [S, "310,350 400,360 450,375 310,385"],
    [K, "545,10 665,10 665,165 545,165"], [L, "540,0 665,0 665,30 560,35 540,90"], [R, "545,170 790,195 795,345 545,345"], [R, "680,0 800,0 735,185 680,185"],
    [G, "805,0 940,0 895,130 885,345 795,345 785,190 735,185"], [P, "683,290 720,290 720,340 683,340"],
    [G, "965,0 1035,40 1035,90 960,240 930,330 895,340 890,150 945,0"], [G, "1110,80 1357,60 1357,290 1245,280 1210,455 990,415 1000,320 1050,190"],
    [L, "1110,75 1180,60 1245,95 1225,180 1190,130 1090,105"], [G, "1280,0 1200,0 1200,60 1250,90"],
    [R, "1245,285 1357,290 1357,1447 1270,1447 1310,1410 1235,1310 1130,1190 1115,1150 1150,860 1205,460"],
    [G, "0,465 150,465 150,600 110,600 110,530 0,525"], [S, "180,458 285,458 285,590 180,590"], [R, "0,525 120,530 130,600 150,610 150,840 0,840"],
    [K, "180,620 290,630 290,800 180,805"], [B, "180,740 310,800 310,860 180,860"],
    [L, "305,500 410,460 730,460 735,490 680,490 680,660 320,665 295,620 350,575"], [G, "320,668 685,660 685,465 750,490 885,515 890,700 930,900 975,1180 885,1190 895,1390 700,1385 640,1340 520,1255 380,1260 380,1305 30,1305 30,1250 270,1240 380,1150 375,880 310,855 310,800"],
    [B, "740,460 885,460 885,510 750,485"],
    [R, "0,850 180,865 350,870 385,920 380,1160 270,1240 30,1250 0,1250 0,1070 110,1065 110,1020 0,1015"], [K, "80,845 180,850 180,1015 70,1010"],
    [G, "0,1015 110,1018 110,1068 0,1068"], ["#defbe1", "605,870 785,865 795,990 690,1012"], [K, "600,840 650,840 650,865 590,870"],
    [G, "980,460 1165,475 1130,1080 1030,1100 990,850"], [L, "1165,480 1190,480 1135,1180 1060,1190 1035,1100 1110,1080"], [G, "1050,1200 1130,1195 1230,1310 1310,1410 1270,1447 1100,1447"],
    [R, "0,1310 380,1310 390,1260 520,1260 640,1345 700,1390 895,1395 905,1447 0,1447"], [K, "415,1262 520,1262 470,1300 415,1305"], [L, "900,1215 985,1215 1000,1300 905,1305"], [B, "885,1195 975,1185 975,1215 890,1215"],
  ],
  buildings: [
    "440,492 565,492 565,520 605,530 600,570 550,575 530,585 420,578 412,530 440,520", "0,80 70,125 70,150 40,165 0,165", "400,0 450,0 450,190 425,190 425,60 395,50",
    "330,870 355,870 355,960 370,1005 325,1005 320,900", "1240,950 1290,965 1280,1005 1255,1000",
  ],
  blocks: [
    [30, 0, 210, 24], [305, 35, 60, 20], [305, 90, 60, 20], [305, 145, 60, 20], [730, 30, 26, 60], [698, 115, 26, 48], [548, 172, 112, 22], [690, 208, 70, 18], [553, 228, 24, 92], [757, 240, 26, 100], [632, 275, 24, 60],
    [0, 530, 115, 18], [55, 570, 30, 80], [0, 640, 40, 50], [60, 680, 60, 24], [0, 780, 40, 50], [90, 770, 50, 50], [210, 910, 34, 76], [215, 868, 76, 20], [215, 990, 40, 28], [140, 1110, 30, 90], [30, 1100, 60, 20], [175, 1180, 22, 34], [205, 1110, 22, 50],
    [40, 1320, 34, 80], [85, 1405, 90, 26], [210, 1315, 110, 24], [220, 1410, 110, 20], [355, 1395, 24, 40], [430, 1320, 26, 32], [480, 1380, 26, 30], [530, 1300, 24, 30], [470, 1290, 24, 20], [575, 1390, 30, 24], [650, 1405, 40, 24], [790, 1410, 30, 22],
    [430, 1400, 30, 34], [1295, 322, 26, 20], [1310, 380, 24, 22], [1235, 465, 40, 18], [1315, 460, 38, 24], [1225, 505, 26, 20], [1230, 555, 26, 28], [1270, 550, 34, 30], [1320, 550, 34, 28], [1210, 600, 26, 18], [1255, 600, 30, 20], [1315, 605, 40, 18],
    [1205, 650, 30, 20], [1265, 650, 34, 28], [1320, 645, 36, 26], [1190, 700, 30, 26], [1240, 695, 30, 18], [1300, 705, 50, 20], [1190, 750, 44, 22], [1250, 755, 20, 40], [1300, 755, 36, 20], [1180, 800, 34, 20], [1230, 800, 20, 30], [1270, 810, 30, 20], [1170, 850, 44, 16],
    [1230, 845, 26, 20], [1275, 840, 30, 24], [1140, 1030, 46, 18], [1145, 1108, 48, 18], [1240, 1055, 30, 20], [1275, 1025, 44, 20], [1265, 1100, 40, 28], [1320, 1130, 34, 24], [1275, 1165, 30, 18], [1300, 1245, 56, 20], [1320, 1310, 36, 28],
  ],
  roads: [
    ["503,0 503,375", 22], ["510,100 555,100", 14], ["160,460 162,870 170,1020", 18], ["170,622 385,620", 16], ["380,595 400,580 415,600 400,620 380,610", 12], ["415,595 540,590 560,575 620,575 620,520 575,520", 10],
    ["597,575 597,760 570,805 520,812 170,812", 12], ["0,738 165,738", 18], ["50,745 50,820", 14], ["985,425 1195,462", 18], ["1285,0 1240,150 1200,470 1155,860", 20], ["0,265 40,240 40,205 0,205", 14],
    ["205,1350 205,1447", 14], ["400,1280 400,1447", 14], ["1205,1140 1275,1270 1240,1310 1350,1420", 14], ["0,372 170,360 290,320 470,245", 14, B], ["290,320 460,370", 12, B], ["310,440 885,448", 14, B],
    ["890,0 890,340", 14, B], ["297,460 297,800", 22, B], ["885,350 950,360", 20, B],
  ],
  cycle: [
    ["30,35 275,35"], ["275,0 275,290", 8], ["477,0 477,370", 8], ["532,0 532,360", 14], ["675,0 675,350", 14], ["88,60 88,180 10,190", 14], ["88,188 130,188 220,240 290,300", 9],
    ["0,390 150,385 290,340 460,250", 9], ["290,320 400,345 470,370", 9], ["530,360 885,358 888,200 945,0", 12], ["310,500 400,455 520,448 800,448 860,490 830,560 790,640 800,740 850,960 880,1130", 10], ["397,465 397,580", 14],
    ["180,594 370,594", 10], ["296,470 296,800", 18], ["145,610 145,690 100,700"], ["0,723 140,723"], ["0,838 290,838"], ["320,850 385,880 397,920 397,1160 410,1280", 12], ["885,1225 770,1235 700,1260 630,1340 560,1410", 9],
    ["900,1215 995,1215"], ["895,1220 905,1300 935,1447", 9], ["1145,870 1135,1000 1115,1160 1170,1230 1240,1310", 10], ["1050,1200 1130,1190", 14], ["0,1270 20,1350 40,1447", 12], ["1000,0 1080,40 1215,105", 8], ["310,520 350,570"],
  ],
  foot: [
    "378,10 378,200", "378,45 480,45", "378,118 480,118", "828,0 828,130", "780,90 865,230", "590,200 660,205", "590,320 600,270 680,270", "690,240 740,250 745,350", "40,270 40,380", "1270,160 1310,160 1310,210", "1260,240 1320,240",
    "0,560 40,570 40,640", "70,560 120,620 60,700", "0,780 60,790 50,820", "100,760 130,830 20,820", "740,470 770,520 770,600 740,660 620,660", "320,770 450,755 590,750 750,740", "430,490 480,470 640,480", "570,810 570,930 530,1020 530,1060",
    "585,880 700,1020 745,1050", "0,1110 80,1105 150,1110 200,1080 330,1090", "10,1150 110,1145", "0,1190 110,1200 120,1030", "240,1060 230,1200 300,1230", "250,1120 330,1140 300,1180", "410,1130 490,1130 560,1160 660,1190 700,1240", "430,1180 440,1240 390,1250",
    "820,1130 850,1170", "215,1355 340,1355 340,1395 215,1395", "430,1320 520,1310 540,1360 480,1400", "640,1400 720,1410 860,1400", "1025,725 1140,725", "1040,900 1100,950", "905,1305 1000,1300", "1035,1110 1060,1190", "1130,1250 1180,1380 1210,1447",
    "0,1445 400,1445", "500,1330 560,1400", "20,1130 60,1170 20,1210", "230,1140 330,1160",
  ],
  trees: [[70, 230], [930, 135], [835, 700], [585, 770], [0, 480]],
};

const MapSheet = ({ s }: { s: Sheet }) => (
  <svg x={s.x} y={s.y} width="460" height={s.h} viewBox="0 0 1380 1568" preserveAspectRatio="none">
    <rect width="1380" height="1568" fill={B} />
    {s.areas.map(([f, p], i) => <polygon key={i} points={p} fill={f} />)}
    <g fill="#d1c6bd">
      {s.buildings.map((p, i) => <polygon key={i} points={p} />)}
      {s.blocks.map(([x, y, w, h], i) => <rect key={i} x={x} y={y} width={w} height={h} />)}
    </g>
    {s.holes?.map(([f, p], i) => <polygon key={i} points={p} fill={f} />)}
    <g fill="none" stroke="#7fae7b" strokeWidth="5" opacity=".75">
      {s.trees.map(([x, y], i) => (
        <g key={i} transform={`translate(${x} ${y})`}>
          <circle cx="23" cy="22" r="19" />
          <path d="M25 42 V78 M70 5 L50 55 H92 Z M71 55 V78" />
        </g>
      ))}
    </g>
    <g fill="none" stroke="#fa8072" strokeWidth="7.5" strokeDasharray="13 12" opacity=".72">
      {s.foot.map((p, i) => <polyline key={i} points={p} />)}
    </g>
    <g fill="none" strokeLinejoin="round">
      {s.roads.map(([p, w], i) => <polyline key={i} points={p} strokeWidth={w + 6} stroke="#c4c4c4" />)}
      {s.roads.map(([p, w, c], i) => <polyline key={i} points={p} strokeWidth={w} stroke={c ?? "#fff"} />)}
    </g>
    <g fill="none" stroke="#3c3cfb" opacity=".74">
      {s.cycle.map(([p, w], i) => <polyline key={i} points={p} strokeWidth={w ?? 7} strokeDasharray="15 17" />)}
    </g>
  </svg>
);

const HALO = { stroke: "#fff", strokeOpacity: 0.8, paintOrder: "stroke" as const };

const StreetMap = () => (
  <svg width="892" height="1145" viewBox="710 587 892 1145">
    <defs>
      <pattern id="dots" width="62" height="82" patternUnits="userSpaceOnUse">
        <rect x="8" y="8" width="14" height="8" fill="#7bb274" />
        <rect x="40" y="48" width="13" height="7" fill="#8cbd7c" />
      </pattern>
    </defs>
    <MapSheet s={southWest} />
    <MapSheet s={southEast} />
    <MapSheet s={northWest} />
    <MapSheet s={northEast} />

    {/* mall walkways around the university */}
    <g fill="none">
      <path d="M1110 935 V890 L1105 875 L1113 840 L1132 830 H1236" stroke="#8c8c8c" strokeWidth="13" strokeDasharray="9 5" />
      <path d="M1110 942 V890 L1105 875 L1113 840 L1132 830 H1236" stroke="#fff" strokeWidth="7" />
      <path d="M1110 942 V890 L1105 875 L1113 840 L1132 830 H1236" stroke="#fa9c90" strokeWidth="7" strokeDasharray="5 6" />
      <path d="M1024 1142 L1047 1135 V1108 H1190 M1187 1108 V1180" stroke="#8c8c8c" strokeWidth="13" strokeDasharray="9 5" />
      <path d="M1024 1142 L1047 1135 V1108 H1190 M1187 1108 V1180" stroke="#fff" strokeWidth="7" />
      <path d="M1047 1108 H1190" stroke="#fa9c90" strokeWidth="6" strokeDasharray="5 6" />
    </g>

    {/* stream */}
    <path d="M1253 1468 L1350 1457 L1446 1449" stroke={W} strokeWidth="4.5" fill="none" />

    {/* secondary roads */}
    <g fill="none" strokeLinejoin="round">
      <path d="M704 1309 H790 C900 1316 960 1332 1050 1335 L1150 1333 C1250 1330 1350 1315 1470 1324" stroke="#a9ad55" strokeWidth="27" />
      <path d="M1465 1320 C1470 1270 1480 1230 1515 1175 C1540 1135 1570 1098 1620 1062" stroke="#a9ad55" strokeWidth="25" />
      <path d="M1466 1320 C1468 1480 1490 1610 1506 1740" stroke="#b3b75c" strokeWidth="27" />
      <path d="M822 1366 Q823 1336 846 1329" stroke="#a9ad55" strokeWidth="7" />
      <path d="M800 1270 L790 1300 H830 L826 1296 Z" fill={YL} />
      <circle cx="813" cy="1314" r="18" fill={YL} stroke="#a9ad55" strokeWidth="2.5" />
      <path d="M704 1309 H790 C900 1316 960 1332 1050 1335 L1150 1333 C1250 1330 1350 1315 1470 1324" stroke={YL} strokeWidth="21" />
      <circle cx="813" cy="1313" r="16" fill={YL} />
      <path d="M1465 1320 C1470 1270 1480 1230 1515 1175 C1540 1135 1570 1098 1620 1062" stroke={YL} strokeWidth="20" />
      <path d="M1466 1320 C1468 1480 1490 1610 1506 1740" stroke={YL} strokeWidth="22" />
      <path d="M1458 1490 C1464 1560 1480 1650 1496 1732" stroke="#fff" strokeWidth="9" strokeDasharray="15 9" />
      <circle cx="813" cy="1314" r="5" stroke="#a9ad55" strokeWidth="2.5" />
      <path d="M971 1325 H982 M971 1340 H982" stroke="#333" strokeWidth="3" />
    </g>
    <rect x="796" y="768" width="9" height="9" fill="#b5b5b5" />
    <circle cx="803" cy="617" r="4.500" fill="#f2efe9" stroke="#555" strokeWidth="2" />
    <rect x="824" y="987" width="50" height="19" fill="none" stroke="#f6f59a" strokeWidth="3" />
    <path d="M1331 706 H1424 V780 H1331 Z" fill="none" stroke="#f9f9a0" strokeWidth="3" />
    <path d="M1305 705 V1030 M1245 1095 V1178" stroke="#f9f9a8" strokeWidth="4" />

    <g fontFamily='"Noto Sans", sans-serif' letterSpacing="0" strokeWidth="5" strokeLinejoin="round">
      <g fontStyle="italic" fontWeight="600" fill="#2c922f" fontSize="28" {...HALO} stroke="#cdebb0">
        <text x="831" y="612" textLength="228" lengthAdjust="spacingAndGlyphs">Kasvitieteellinen</text>
        <text x="877" y="650" textLength="136" lengthAdjust="spacingAndGlyphs">puutarha</text>
      </g>
      <text x="989" y="704" fontSize="26" fontWeight="500" fill="#333" textLength="132" lengthAdjust="spacingAndGlyphs" {...HALO}>Kaitovayla</text>
      <g fill="#7b7b7b" fontSize="43" {...HALO} strokeWidth="7">
        <text x="759" y="1033" textLength="234" lengthAdjust="spacingAndGlyphs">Linnanmaa</text>
        <text x="1426" y="862" textLength="182" lengthAdjust="spacingAndGlyphs">Kaijonha</text>
      </g>
      <text x="1005" y="1013" fontSize="36" fontStyle="italic" fontWeight="500" fill="#625a12" textLength="253" lengthAdjust="spacingAndGlyphs" {...HALO} strokeOpacity="0.35">Oulun yliopisto</text>
      <text x="1266" y="1598" fontSize="31" fontStyle="italic" fontWeight="500" fill="#55804f" textLength="218" lengthAdjust="spacingAndGlyphs" {...HALO} strokeOpacity="0.55">Huusarinpuisto</text>
      <text x="711" y="1081" fontSize="30" fontStyle="italic" fill="#7f3f3f" textLength="30" lengthAdjust="spacingAndGlyphs" {...HALO} strokeOpacity="0.5">ıla</text>
      <text transform="translate(801 1047) rotate(90)" fontSize="26" fontWeight="600" fill="#222" textLength="136" lengthAdjust="spacingAndGlyphs" {...HALO}>Kaitovayla</text>
      <text transform="translate(1449 1335) rotate(90)" fontSize="27" fontWeight="600" fill="#222" textLength="147" lengthAdjust="spacingAndGlyphs" {...HALO} stroke={YL}>Alakyläntie</text>
      <text transform="translate(1572 1131) rotate(-52)" fontSize="26" fontWeight="500" fill="#222" {...HALO} stroke={YL}>Alak</text>
      <text x="763" y="1476" fontSize="54" fontWeight="600" fill="#0092da">P</text>
    </g>
    <path d="M711 587 V1732 M710 1731 H1602" stroke="#8a8a8a" strokeWidth="1.500" opacity=".6" />
  </svg>
);

/* ---------- data ---------- */

const MENUS: [string, number][] = [["File", 98], ["Edit", 107], ["View", 122], ["Simulation", 219], ["Tools", 132], ["Help", 90]];
const Y_TICKS = ["65.064", "65.062", "65.06", "65.058", "65.056", "65.054", "65.052"];
const X_TICKS = ["25.46", "25.465", "25.47", "25.475", "25.48"];
const TOOLS = [ClockIcon, ScrollIcon, PersonIcon, MixerIcon, PanelIcon, GearIcon, SaunaIcon];

const AB = "A or B class";
const CD = "C or D class";
const EF = "E or F class";
const APPLIANCES: [string, string][] = [
  ["Appl.", "Rate"], ["Coffee", EF], ["Dish Washer", CD], ["Electric heating in bathroom", "-"], ["Electric plates", "-"],
  ["Fridge", EF], ["Hair Dryer", EF], ["Iron", AB], ["Kettle", AB], ["Laptop", AB], ["Laptop", EF], ["Micro-Wave", AB],
  ["Oven", AB], ["Radio", EF], ["Sauna", "-"], ["Shaver", AB], ["Shaver", CD], ["Stereo", AB], ["Stereo", EF],
  ["Telephone Charger", AB], ["Telephone Charger", CD], ["Telephone Charger", EF], ["Television", AB], ["Toaster", AB],
  ["Vacuum Cleaner", AB], ["Waffle Maker", AB], ["Washing Machine", AB], ["Washing Machine", AB],
];
const SELECTED = 26;

export default function App() {
  return (
    <>
      <Global />
      <Window>
        <TitleBar>
          <Logo />
          <Title>Smart house model - University of Oulu</Title>
          <Controls>
            <svg width="31" height="31"><path d="M0 15 H31" stroke="#000" strokeWidth="2.5" /></svg>
            <svg width="31" height="31"><rect x="1.200" y="1.200" width="28" height="28" fill="none" stroke="#000" strokeWidth="2.4" /></svg>
            <svg width="31" height="31"><path d="M1 1 L30 30 M30 1 L1 30" stroke="#000" strokeWidth="2.4" /></svg>
          </Controls>
        </TitleBar>
        <MenuBar>
          {MENUS.map(([m, w]) => <MenuItem key={m} $w={w}>{m}</MenuItem>)}
          <svg width="24" height="18" viewBox="0 0 24 18">
            <path d="M1 5 Q5 0 10 3 L17 9" fill="none" stroke="#111" strokeWidth="4.500" />
            <path d="M22 1 V17 H7 Z" fill="#000" />
          </svg>
        </MenuBar>

        <Body>
          <Panel>
            <Bar $track={0.5}>Specifications:</Bar>
            <SpecBody>
              <SelectionPanel>
                <Bar $track={-0.1}>House Selection<b>?</b></Bar>
                <CheckRow><Box /><span>Use the sam...</span></CheckRow>
              </SelectionPanel>
              <ListFrame>
                <Items>
                  <HouseItem $on>House1</HouseItem>
                  <HouseItem>House2</HouseItem>
                </Items>
                <ScrollCol><Chevron dir="up" /><Chevron dir="down" /></ScrollCol>
              </ListFrame>
            </SpecBody>
          </Panel>

          <Splitter><i /><i /><i /></Splitter>

          <Panel>
            <Bar $track={0.2}>Viewing: House1</Bar>
            <Fields>
              <TextField>University of Oulu</TextField>
              <Dropdown>0<DropArrow><Chevron dir="down" thin /></DropArrow></Dropdown>
              <Dropdown>osm<DropArrow><Chevron dir="down" thin /></DropArrow></Dropdown>
            </Fields>
            <Actions>
              <Button $w={388}>Update Location</Button>
              <Button $w={388}>Update Resolution</Button>
              <Button $w={388}>Update Layout</Button>
              <Button $w={393} $raised>Update All</Button>
            </Actions>
            <Plot>
              <YAxis>{Y_TICKS.map((t) => <YTick key={t}>{t}</YTick>)}</YAxis>
              <StreetMap />
              <XAxis>{X_TICKS.map((t) => <span key={t}>{t}</span>)}</XAxis>
            </Plot>
          </Panel>

          <Splitter><i /><i /><i /></Splitter>

          <RightCol>
            <Toolbar $bg="#fff">
              {TOOLS.map((Icon, i) => <ToolButton key={i}><Icon /></ToolButton>)}
            </Toolbar>
            <Panel>
              <Bar $track={0.4}>Settings<b>?</b></Bar>
              <SettingsBody>
                <Group>
                  <Legend>Set house details</Legend>
                  <GroupBody>
                    <GroupMain>
                      <AppliancePanel>
                        <Bar $track={0.3}>
                          Appliances
                          <BarTools><Triangle dir="up" fill="#fff" size={17} />?</BarTools>
                        </Bar>
                        <ListHeader>
                          <ListTitle>Appliances</ListTitle>
                          <ChartIcon />
                          <SmallButton>+</SmallButton>
                          <SmallButton>-</SmallButton>
                        </ListHeader>
                        <ApplianceList>
                          <Rows>
                            {APPLIANCES.map(([name, rate], i) => (
                              <Row key={i} $on={i === SELECTED}><span>{name}</span><Rate>{rate}</Rate></Row>
                            ))}
                          </Rows>
                          <ScrollCol><Chevron dir="up" /><Chevron dir="down" /></ScrollCol>
                          <HScroll><Chevron dir="left" /><HThumb /><Chevron dir="right" /></HScroll>
                          <Corner />
                        </ApplianceList>
                      </AppliancePanel>
                    </GroupMain>
                    <OldScroll>
                      <OldArrow><Triangle dir="up" fill="#696969" size={20} /></OldArrow>
                      <OldTrough />
                      <OldThumb />
                      <OldArrow><Triangle dir="down" fill="#696969" size={20} /></OldArrow>
                    </OldScroll>
                  </GroupBody>
                </Group>
              </SettingsBody>
            </Panel>
          </RightCol>
        </Body>
      </Window>
    </>
  );
}
